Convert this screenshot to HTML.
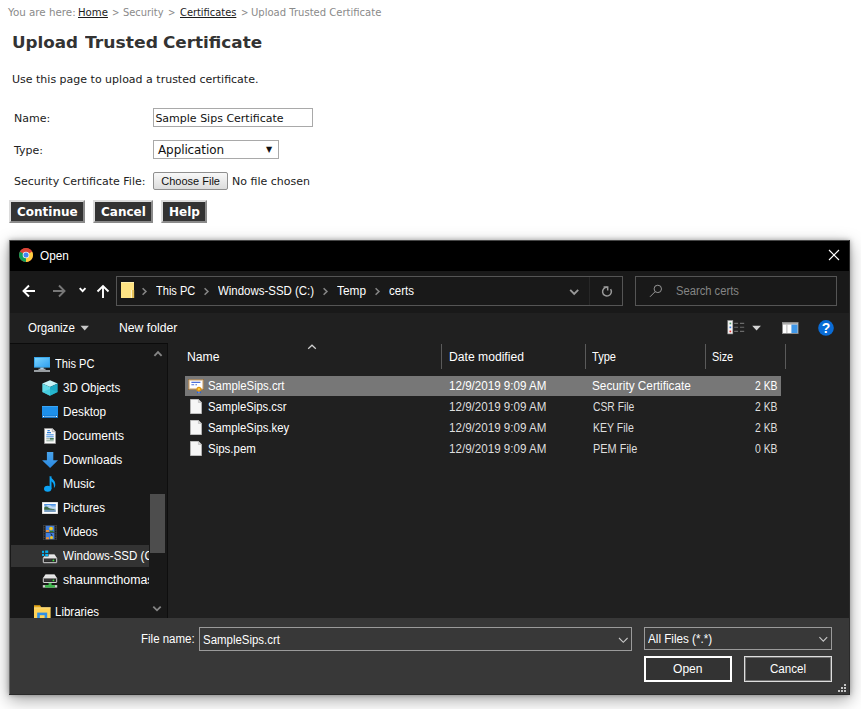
<!DOCTYPE html>
<html><head><meta charset="utf-8"><title>Upload Trusted Certificate</title>
<style>
html,body{margin:0;padding:0;background:#fff;}
body{width:861px;height:709px;overflow:hidden;position:relative;font-family:"DejaVu Sans","Liberation Sans",sans-serif;}
.a{position:absolute;white-space:nowrap;line-height:1;}
.s{font-family:"Liberation Sans","DejaVu Sans",sans-serif;}
.v{font-family:"DejaVu Sans","Liberation Sans",sans-serif;}
#bc{left:7px;top:8px;font-size:10px;color:#8a8a8a;letter-spacing:0.045px;}
#bc u{color:#222;}
#h1{left:12px;top:35px;font-size:16px;font-weight:bold;color:#333;letter-spacing:0.5px;}
#intro{left:12px;top:74px;font-size:11px;color:#1a1a1a;}
.lbl{font-size:11px;color:#222;left:14px;}
#inp{left:153px;top:108px;width:158px;height:17px;border:1px solid #a9a9a9;background:#fff;}
#sel{left:153px;top:140px;width:124px;height:17px;border:1px solid #a9a9a9;background:#fff;}
#cf{left:153px;top:172px;width:73px;height:16px;border:1px solid #8f8f8f;background:linear-gradient(#f8f8f8,#dcdcdc);border-radius:2px;}
.btn{top:200px;height:19px;background:#333;border:2px solid #dcdcdc;border-right-color:#8a8a8a;border-bottom-color:#8a8a8a;color:#fff;font-weight:bold;font-size:12px;}
.btn span{position:absolute;top:4px;left:6px;}
#dlg{left:9px;top:240px;width:841px;height:455px;background:#202020;box-shadow:0 5px 16px rgba(0,0,0,.36),0 0 5px rgba(0,0,0,.30);}
</style></head><body>
<div class="a" id="intro">Use this page to upload a trusted certificate.</div>
<div class="a lbl" id="l1" style="top:113px">Name:</div>
<div class="a lbl" id="l2" style="top:145px">Type:</div>
<div class="a lbl" id="l3" style="top:176px">Security Certificate File:</div>
<div class="a" id="inp"><span class="a" id="inpt" style="left:1.4px;top:4px;font-size:11px;color:#111">Sample Sips Certificate</span></div>
<div class="a" id="sel"><span class="a" id="selt" style="left:4px;top:3px;font-size:12px;color:#111;letter-spacing:-0.1px">Application</span><span class="a" style="left:112px;top:4.5px;font-size:8px;color:#111">&#9660;</span></div>
<div class="a" id="cf"><span class="a s" id="cft" style="left:7.3px;top:2.6px;font-size:11px;color:#111">Choose File</span></div>
<div class="a" id="nfc" style="left:232px;top:176px;font-size:11px;color:#222">No file chosen</div>
<div class="a btn" id="b1" style="left:9px;width:72px"><span id="b1t">Continue</span></div>
<div class="a btn" id="b2" style="left:93px;width:56px"><span id="b2t">Cancel</span></div>
<div class="a btn" id="b3" style="left:161px;width:42px"><span id="b3t">Help</span></div>
<div class="a" id="dlg"></div>
<div class="a v" id="t1" style="left:7.53231px;top:8.02px;font-size:10px;color:#8a8a8a;transform:scaleX(1.0304);transform-origin:0 0;">You are here:</div>
<div class="a v" id="t2" style="left:77.9386px;top:8.02px;font-size:10px;color:#1c1c1c;transform:scaleX(1.0137);transform-origin:0 0;text-decoration:underline;">Home</div>
<div class="a v" id="t3" style="left:111.726px;top:8.02px;font-size:10px;color:#8a8a8a;transform:scaleX(0.8790);transform-origin:0 0;">&gt;</div>
<div class="a v" id="t4" style="left:123.475px;top:8.02px;font-size:10px;color:#8a8a8a;transform:scaleX(0.9870);transform-origin:0 0;">Security</div>
<div class="a v" id="t5" style="left:168.026px;top:8.02px;font-size:10px;color:#8a8a8a;transform:scaleX(0.8790);transform-origin:0 0;">&gt;</div>
<div class="a v" id="t6" style="left:179.935px;top:8.02px;font-size:10px;color:#1c1c1c;transform:scaleX(0.9860);transform-origin:0 0;text-decoration:underline;">Certificates</div>
<div class="a v" id="t7" style="left:240.626px;top:8.02px;font-size:10px;color:#8a8a8a;transform:scaleX(0.8790);transform-origin:0 0;">&gt;</div>
<div class="a v" id="t8" style="left:250.896px;top:8.02px;font-size:10px;color:#8a8a8a;transform:scaleX(1.0019);transform-origin:0 0;">Upload Trusted Certificate</div>
<div class="a v" id="t9" style="left:12.0225px;top:35.29px;font-size:16px;color:#333;transform:scaleX(1.0458);transform-origin:0 0;font-weight:bold;">Upload</div>
<div class="a v" id="t10" style="left:84.5199px;top:35.29px;font-size:16px;color:#333;transform:scaleX(1.0750);transform-origin:0 0;font-weight:bold;">Trusted</div>
<div class="a v" id="t11" style="left:163.128px;top:35.29px;font-size:16px;color:#333;transform:scaleX(1.0514);transform-origin:0 0;font-weight:bold;">Certificate</div>
<div class="a" style="left:9px;top:240px;width:841px;height:31px;background:#000;"></div>
<div class="a" style="left:9px;top:240px;width:841px;height:1px;background:#484848;"></div>
<div class="a" style="left:9px;top:271px;width:841px;height:42px;background:#191919;"></div>
<div class="a" style="left:9px;top:313px;width:841px;height:30px;background:#202020;"></div>
<div class="a" style="left:9px;top:343px;width:159px;height:275px;background:#191919;"></div>
<div class="a" style="left:167px;top:344px;width:1px;height:274px;background:#0e0e0e;"></div>
<div class="a" style="left:10px;top:343px;width:839px;height:1px;background:#0b0b0b;"></div>
<div class="a" style="left:168px;top:343px;width:682px;height:275px;background:#202020;"></div>
<div class="a" style="left:9px;top:618px;width:841px;height:77px;background:#383838;"></div>
<div class="a" style="left:9px;top:240px;width:1px;height:455px;background:#686868;"></div>
<div class="a" style="left:849px;top:240px;width:1px;height:455px;background:#2a2a2a;"></div>
<div class="a" style="left:9px;top:694px;width:841px;height:1px;background:#2a2a2a;"></div>
<svg class="a" style="left:19px;top:248px;" width="14" height="14" viewBox="0 0 14 14"><circle cx="7" cy="7" r="7" fill="#db4437"/>
<path d="M7 7 L13.06 3.5 A7 7 0 0 1 7 14 Z" fill="#ffcd40"/>
<path d="M7 7 L7 14 A7 7 0 0 1 0.94 3.5 Z" fill="#0f9d58"/>
<path d="M7 7 L0.94 3.5 A7 7 0 0 1 13.06 3.5 Z" fill="#db4437"/>
<circle cx="7" cy="7" r="3.3" fill="#f1f1f1"/><circle cx="7" cy="7" r="2.5" fill="#4285f4"/></svg>
<div class="a s" id="t12" style="left:39.736px;top:250.14px;font-size:12px;color:#fff;transform:scaleX(0.9827);transform-origin:0 0;">Open</div>
<svg class="a" style="left:828px;top:249px;" width="12" height="12" viewBox="0 0 12 12"><path d="M1 1 L11 11 M11 1 L1 11" stroke="#fff" stroke-width="1.1" fill="none"/></svg>
<svg class="a" style="left:22px;top:284px;" width="14" height="14" viewBox="0 0 14 14"><path d="M13 7 H1.6 M7 1.5 L1.5 7 L7 12.5" stroke="#fff" stroke-width="1.9" fill="none"/></svg>
<svg class="a" style="left:52px;top:284px;" width="14" height="14" viewBox="0 0 14 14"><path d="M1 7 H12.4 M7 1.5 L12.5 7 L7 12.5" stroke="#777" stroke-width="1.9" fill="none"/></svg>
<svg class="a" style="left:78px;top:286px;" width="9" height="8" viewBox="0 0 9 8"><path d="M1.7 2.2 L4.6 5.1 L7.5 2.2" stroke="#fff" stroke-width="1.9" fill="none"/></svg>
<svg class="a" style="left:96px;top:284px;" width="14" height="15" viewBox="0 0 14 15"><path d="M7 14 V2 M1.5 7.5 L7 2 L12.5 7.5" stroke="#fff" stroke-width="1.9" fill="none"/></svg>
<div class="a" style="left:116px;top:276px;width:505px;height:28px;background:#191919;border:1px solid #555;"></div>
<div class="a" style="left:589px;top:277px;width:1px;height:28px;background:#272727;"></div>
<svg class="a" style="left:121px;top:282px;" width="14" height="16" viewBox="0 0 14 16"><rect x="0" y="0" width="13" height="16" fill="#ffe484"/><rect x="0" y="0" width="13" height="1" fill="#fff0b0"/><rect x="10" y="8" width="3.2" height="8" fill="#e6c25a"/><rect x="10" y="8" width="1" height="8" fill="#fff3c4"/></svg>
<svg class="a" style="left:141.2px;top:286.8px;" width="7" height="9" viewBox="0 0 7 9"><path d="M1.6 1.3 L4.9 4.5 L1.6 7.7" stroke="#858585" stroke-width="1.6" fill="none"/></svg>
<div class="a s" id="t13" style="left:156.373px;top:285.14px;font-size:12px;color:#fff;transform:scaleX(0.9219);transform-origin:0 0;">This PC</div>
<svg class="a" style="left:203.2px;top:286.8px;" width="7" height="9" viewBox="0 0 7 9"><path d="M1.6 1.3 L4.9 4.5 L1.6 7.7" stroke="#858585" stroke-width="1.6" fill="none"/></svg>
<div class="a s" id="t14" style="left:217.893px;top:285.14px;font-size:12px;color:#fff;transform:scaleX(0.9539);transform-origin:0 0;">Windows-SSD (C:)</div>
<svg class="a" style="left:322.4px;top:286.8px;" width="7" height="9" viewBox="0 0 7 9"><path d="M1.6 1.3 L4.9 4.5 L1.6 7.7" stroke="#858585" stroke-width="1.6" fill="none"/></svg>
<div class="a s" id="t15" style="left:337.365px;top:285.14px;font-size:12px;color:#fff;transform:scaleX(0.9870);transform-origin:0 0;">Temp</div>
<svg class="a" style="left:374.3px;top:286.8px;" width="7" height="9" viewBox="0 0 7 9"><path d="M1.6 1.3 L4.9 4.5 L1.6 7.7" stroke="#858585" stroke-width="1.6" fill="none"/></svg>
<div class="a s" id="t16" style="left:389.258px;top:285.14px;font-size:12px;color:#fff;transform:scaleX(0.9584);transform-origin:0 0;">certs</div>
<svg class="a" style="left:569px;top:288px;" width="11" height="8" viewBox="0 0 11 8"><path d="M1.2 1.8 L5.2 5.8 L9.2 1.8" stroke="#999" stroke-width="1.9" fill="none"/></svg>
<svg class="a" style="left:600px;top:284px;" width="13" height="14" viewBox="0 0 13 14"><path d="M10.6 5.1 A4.4 4.4 0 1 1 7.2 3.2" stroke="#999" stroke-width="1.5" fill="none"/><path d="M3.6 3 H7.7 V6.4" stroke="#999" stroke-width="1.5" fill="none"/></svg>
<div class="a" style="left:635px;top:276px;width:200px;height:28px;background:#191919;border:1px solid #555;"></div>
<svg class="a" style="left:649px;top:284px;" width="14" height="14" viewBox="0 0 14 14"><circle cx="8.8" cy="4.9" r="3.7" stroke="#959595" stroke-width="1" fill="none"/><path d="M6.1 7.7 L1 12.8" stroke="#959595" stroke-width="1"/></svg>
<div class="a s" id="t17" style="left:676.207px;top:285.14px;font-size:12px;color:#858585;transform:scaleX(0.9328);transform-origin:0 0;">Search certs</div>
<div class="a s" id="t18" style="left:28.2418px;top:322.14px;font-size:12px;color:#fff;transform:scaleX(0.9610);transform-origin:0 0;">Organize</div>
<svg class="a" style="left:80px;top:325px;" width="10" height="6" viewBox="0 0 10 6"><path d="M0.5 0.8 H8.9 L4.7 5.4 Z" fill="#c8c8c8"/></svg>
<div class="a s" id="t19" style="left:118.936px;top:322.14px;font-size:12px;color:#fff;transform:scaleX(1.0162);transform-origin:0 0;">New folder</div>
<svg class="a" style="left:726.8px;top:320px;" width="18" height="15" viewBox="0 0 18 15"><rect x="0.8" y="0.5" width="5" height="13.4" fill="#f6f6f6" stroke="#9a9a9a" stroke-width="0.6"/>
<rect x="2.5" y="2.6" width="1.7" height="1.7" fill="#4a9a6a"/><rect x="2.5" y="6.5" width="1.7" height="1.7" fill="#3a78e0"/><rect x="2.5" y="10.6" width="1.7" height="1.7" fill="#e03030"/>
<path d="M7.2 3.4 H11.1 M13 3.4 H17.2 M7.2 7.3 H11.1 M13 7.3 H17.2 M7.2 11.4 H11.1 M13 11.4 H17.2" stroke="#6a6a6a" stroke-width="1.1"/></svg>
<svg class="a" style="left:752px;top:325px;" width="10" height="6" viewBox="0 0 10 6"><path d="M0.2 0.8 H8.9 L4.55 5.6 Z" fill="#d4d4d4"/></svg>
<svg class="a" style="left:782px;top:322px;" width="17" height="12" viewBox="0 0 17 12"><rect x="0.5" y="0.5" width="15.5" height="11" fill="#fdfdfd" stroke="#8c8c8c" stroke-width="1"/><rect x="1" y="1" width="14.5" height="1.6" fill="#a9a9a9"/><rect x="4.4" y="2.6" width="1" height="8.4" fill="#b4b4b4"/><rect x="9.4" y="2.6" width="6.1" height="8.4" fill="#3f97e8"/></svg>
<svg class="a" style="left:818px;top:320px;" width="16" height="16" viewBox="0 0 16 16"><circle cx="8" cy="7.9" r="7.8" fill="#0a6cd6"/></svg>
<div class="a s" id="t20" style="left:821.639px;top:321.07px;font-size:14px;color:#fff;transform:scaleX(1.0000);transform-origin:0 0;font-weight:bold;">?</div>
<div class="a" style="left:11px;top:545px;width:138px;height:22px;background:#333333;"></div>
<svg class="a" style="left:152.6px;top:349.6px;" width="10" height="8" viewBox="0 0 10 8"><path d="M1.4 5.8 L5 2.2 L8.6 5.8" stroke="#858585" stroke-width="1.9" fill="none"/></svg>
<svg class="a" style="left:152px;top:605px;" width="10" height="7" viewBox="0 0 10 7"><path d="M1.3 1.6 L5 5.3 L8.7 1.6" stroke="#858585" stroke-width="1.8" fill="none"/></svg>
<div class="a" style="left:150px;top:494px;width:15px;height:59px;background:#4d4d4d;"></div>
<div class="a s" id="t21" style="left:55.3731px;top:357.64px;font-size:12px;color:#fff;transform:scaleX(0.9243);transform-origin:0 0;">This PC</div>
<div class="a s" id="t22" style="left:62.9936px;top:381.64px;font-size:12px;color:#fff;transform:scaleX(0.9646);transform-origin:0 0;">3D Objects</div>
<div class="a s" id="t23" style="left:63.2755px;top:405.64px;font-size:12px;color:#fff;transform:scaleX(0.9785);transform-origin:0 0;">Desktop</div>
<div class="a s" id="t24" style="left:63.247px;top:429.64px;font-size:12px;color:#fff;transform:scaleX(1.0057);transform-origin:0 0;">Documents</div>
<div class="a s" id="t25" style="left:63.2537px;top:453.64px;font-size:12px;color:#fff;transform:scaleX(0.9993);transform-origin:0 0;">Downloads</div>
<div class="a s" id="t26" style="left:63.4369px;top:477.64px;font-size:12px;color:#fff;transform:scaleX(1.0153);transform-origin:0 0;">Music</div>
<div class="a s" id="t27" style="left:63.284px;top:501.64px;font-size:12px;color:#fff;transform:scaleX(0.9703);transform-origin:0 0;">Pictures</div>
<div class="a s" id="t28" style="left:63.1753px;top:525.64px;font-size:12px;color:#fff;transform:scaleX(0.9496);transform-origin:0 0;">Videos</div>
<div class="a" style="left:10px;top:343px;width:139px;height:275px;overflow:hidden">
<div class="a s" id="t29" style="left:53.1925px;top:206.64px;font-size:12px;color:#fff;transform:scaleX(0.9619);transform-origin:0 0;">Windows-SSD (C:)</div>
<div class="a s" id="t30" style="left:53.0279px;top:230.64px;font-size:12px;color:#fff;transform:scaleX(1.0280);transform-origin:0 0;">shaunmcthomas</div>
</div>
<div class="a s" id="t31" style="left:55.199px;top:605.64px;font-size:12px;color:#fff;transform:scaleX(0.9560);transform-origin:0 0;">Libraries</div>
<svg class="a" style="left:34px;top:357px;" width="16" height="15" viewBox="0 0 16 15"><defs><linearGradient id="gm" x1="0" y1="0" x2="1" y2="1"><stop offset="0" stop-color="#7dd6ff"/><stop offset="1" stop-color="#2f9ff0"/></linearGradient></defs>
<rect x="0.5" y="0.5" width="15" height="9.6" fill="url(#gm)" stroke="#3aa8ec" stroke-width="1"/>
<rect x="6.3" y="10.5" width="3.4" height="1.6" fill="#9ec8e6"/><rect x="4.5" y="11.8" width="7" height="0.9" fill="#dfe9f0"/>
<rect x="0" y="13.3" width="16" height="1.4" fill="#cfd6dc"/></svg>
<svg class="a" style="left:42px;top:380px;" width="16" height="16" viewBox="0 0 16 16"><path d="M8 0.3 L15.7 3.6 L8 7 L0.3 3.6 Z" fill="#c7f4f8"/>
<path d="M0.3 3.6 L8 7 L8 15.8 L0.3 12 Z" fill="#63dbe8"/>
<path d="M15.7 3.6 L8 7 L8 15.8 L15.7 12 Z" fill="#1cabc6"/>
<path d="M0.3 12 L8 9 L15.7 12 L8 15.8 Z" fill="#2fc0d6" opacity="0.55"/></svg>
<svg class="a" style="left:42px;top:406px;" width="16" height="12" viewBox="0 0 16 12"><rect x="0" y="0" width="16" height="11.7" fill="#1d8fea"/><rect x="0" y="0" width="16" height="1" fill="#3aa5f5"/>
<rect x="0" y="9.3" width="16" height="2.4" fill="#1679d2"/><rect x="1" y="10" width="1.2" height="1" fill="#fff"/><rect x="13.8" y="10" width="1.2" height="1" fill="#fff"/><rect x="3" y="10.2" width="10" height="0.7" fill="#8fc8f6"/></svg>
<svg class="a" style="left:44px;top:428px;" width="12" height="16" viewBox="0 0 12 16"><path d="M0.5 0.5 H8.3 L11.5 3.7 V15.5 H0.5 Z" fill="#fafafa" stroke="#9a9a9a" stroke-width="0.8"/>
<path d="M8.3 0.5 V3.7 H11.5" fill="#e4e4e4" stroke="#9a9a9a" stroke-width="0.7"/>
<path d="M3.5 2.6 L5.8 2.6 M3 4.6 H7" stroke="#2f7fd8" stroke-width="1.1"/>
<path d="M2.3 6.8 H9.7 M2.3 8.8 H9.7" stroke="#3a8ae0" stroke-width="1"/><path d="M2.3 10.8 H9.7 M2.3 12.8 H9.7" stroke="#7a9a8a" stroke-width="0.9"/><rect x="6" y="10.2" width="3.7" height="1.3" fill="#2c6e49"/></svg>
<svg class="a" style="left:42px;top:452px;" width="16" height="16" viewBox="0 0 16 16"><defs><linearGradient id="gd" x1="0" y1="0" x2="0" y2="1"><stop offset="0" stop-color="#4aa4ec"/><stop offset="1" stop-color="#2a8ae2"/></linearGradient></defs><path d="M4.9 -0.2 H11.3 V8.2 H16.1 L8.1 16 L0.1 8.2 H4.9 Z" fill="url(#gd)"/></svg>
<svg class="a" style="left:44px;top:476px;" width="12" height="16" viewBox="0 0 12 16"><ellipse cx="3.7" cy="12.7" rx="3.7" ry="3" fill="#0ca3f5"/><rect x="5.6" y="0.3" width="1.9" height="12.6" fill="#0ca3f5"/>
<path d="M5.6 0.3 C7.5 3 11.5 4 11.3 9 C11.2 10.3 10.6 11.3 9.9 12 C10.3 8 9 6.6 7.4 5.6 Z" fill="#0ca3f5"/></svg>
<svg class="a" style="left:42px;top:502px;" width="16" height="12" viewBox="0 0 16 12"><defs><linearGradient id="gs" x1="0" y1="0" x2="0" y2="1"><stop offset="0" stop-color="#3a86e2"/><stop offset="0.5" stop-color="#cfe3f6"/><stop offset="0.75" stop-color="#86a9c6"/><stop offset="1" stop-color="#4f7fae"/></linearGradient></defs>
<rect x="0" y="0" width="16" height="12" fill="#bdbdbd"/><rect x="0.5" y="0.5" width="15" height="11" fill="#fff"/>
<rect x="2.2" y="2" width="11.6" height="7.8" fill="url(#gs)"/>
<path d="M4 3.6 C6 3 8 3.4 10 4.2 C8 4.6 6 4.4 4 3.6 Z" fill="#fff" opacity="0.8"/>
<path d="M2.2 5.4 C3.5 4 5 4.6 6.6 5.8 C8.4 6.9 10.4 7 12.4 7.1 V7.7 H2.2 Z" fill="#3d6b45"/></svg>
<svg class="a" style="left:43px;top:525px;" width="14" height="15" viewBox="0 0 14 15"><rect x="0" y="0" width="14" height="15" fill="#3e3e3e"/><rect x="2.8" y="0.8" width="8.4" height="6.3" fill="#3f7fe0"/><rect x="2.8" y="7.9" width="8.4" height="6.3" fill="#3f7fe0"/><rect x="0.7" y="0.9" width="1.3" height="1.4" fill="#1a1a1a"/><rect x="12" y="0.9" width="1.3" height="1.4" fill="#1a1a1a"/><rect x="0.7" y="3.3" width="1.3" height="1.4" fill="#1a1a1a"/><rect x="12" y="3.3" width="1.3" height="1.4" fill="#1a1a1a"/><rect x="0.7" y="5.7" width="1.3" height="1.4" fill="#1a1a1a"/><rect x="12" y="5.7" width="1.3" height="1.4" fill="#1a1a1a"/><rect x="0.7" y="8.1" width="1.3" height="1.4" fill="#1a1a1a"/><rect x="12" y="8.1" width="1.3" height="1.4" fill="#1a1a1a"/><rect x="0.7" y="10.5" width="1.3" height="1.4" fill="#1a1a1a"/><rect x="12" y="10.5" width="1.3" height="1.4" fill="#1a1a1a"/><rect x="0.7" y="12.9" width="1.3" height="1.4" fill="#1a1a1a"/><rect x="12" y="12.9" width="1.3" height="1.4" fill="#1a1a1a"/><circle cx="8" cy="3.6" r="1.9" fill="#f2c81e"/><rect x="3" y="5" width="3" height="2" fill="#e8913a"/><rect x="7" y="5.8" width="3.5" height="1.3" fill="#2e7d32"/><circle cx="8.5" cy="12.4" r="1.5" fill="#f2c81e"/><rect x="3" y="12.2" width="3" height="2" fill="#e8913a"/><path d="M7.5 8 L10 10.5 L8 10.5 Z" fill="#222"/></svg>
<svg class="a" style="left:42px;top:550.2px;" width="16" height="14" viewBox="0 0 16 14"><path d="M3.2 4.8 H12.8 L14.9 8 H1.1 Z" fill="#e2e2e2"/><path d="M3.4 4.9 H12.6" stroke="#fafafa" stroke-width="0.8"/><rect x="1.3" y="8" width="13.4" height="4.7" rx="0.4" fill="#2b2b2b" stroke="#e6e6e6" stroke-width="0.9"/><rect x="2.4" y="9.6" width="7" height="0.8" fill="#4a4a4a"/><circle cx="11.4" cy="10.4" r="0.9" fill="#3cf040"/><rect x="2.4" y="3.6" width="4.2" height="2.8" fill="#333"/><rect x="-0.2" y="0.8" width="2.2" height="2.1" fill="#08b4f4"/><rect x="3.2" y="0.5" width="3" height="2.4" fill="#08b4f4"/><rect x="-0.2" y="3.9" width="2.2" height="2.1" fill="#08b4f4"/><rect x="3.2" y="3.9" width="3" height="2.4" fill="#08b4f4"/></svg>
<svg class="a" style="left:42px;top:570.2px;" width="16" height="18" viewBox="0 0 16 18"><path d="M3.2 4.8 H12.8 L14.9 8 H1.1 Z" fill="#e2e2e2"/><path d="M3.4 4.9 H12.6" stroke="#fafafa" stroke-width="0.8"/>
<rect x="1.3" y="8" width="13.4" height="4.5" rx="0.4" fill="#2b2b2b" stroke="#e6e6e6" stroke-width="0.9"/><rect x="2.4" y="9.6" width="7" height="0.8" fill="#4a4a4a"/><circle cx="11.4" cy="10.3" r="0.9" fill="#3cf040"/>
<rect x="6.6" y="12.9" width="3" height="2.6" fill="#3cb54a"/><rect x="0.8" y="15.1" width="14.4" height="2.5" fill="#d0d0d0"/><rect x="3" y="15.1" width="10" height="2.5" fill="#3cb54a"/></svg>
<svg class="a" style="left:34px;top:605px;" width="17" height="13" viewBox="0 0 17 13"><path d="M0 0.3 H6 L7.6 2.4 H0 Z" fill="#e6a817"/><rect x="0" y="2.4" width="16.6" height="11" fill="#ffd257"/><rect x="0" y="2.4" width="16.6" height="0.9" fill="#ffe28a"/>
<rect x="3.2" y="7.6" width="10" height="6" fill="#2f8fe6"/><rect x="5.8" y="10.2" width="4.8" height="3.4" fill="#ffd257"/></svg>
<svg class="a" style="left:306.6px;top:343.5px;" width="10" height="6" viewBox="0 0 10 6"><path d="M1.2 4.8 L5 1.2 L8.8 4.8" stroke="#cfcfcf" stroke-width="1.2" fill="none"/></svg>
<div class="a" style="left:441px;top:344px;width:1px;height:25px;background:#5a5a5a;"></div>
<div class="a" style="left:585px;top:344px;width:1px;height:25px;background:#5a5a5a;"></div>
<div class="a" style="left:705px;top:344px;width:1px;height:25px;background:#5a5a5a;"></div>
<div class="a" style="left:785px;top:344px;width:1px;height:25px;background:#5a5a5a;"></div>
<div class="a s" id="t32" style="left:187.336px;top:350.74px;font-size:12px;color:#fff;transform:scaleX(1.0162);transform-origin:0 0;">Name</div>
<div class="a s" id="t33" style="left:448.64px;top:350.74px;font-size:12px;color:#fff;transform:scaleX(1.0122);transform-origin:0 0;">Date modified</div>
<div class="a s" id="t34" style="left:592.274px;top:350.64px;font-size:12px;color:#fff;transform:scaleX(0.9214);transform-origin:0 0;">Type</div>
<div class="a s" id="t35" style="left:712.336px;top:350.74px;font-size:12px;color:#fff;transform:scaleX(0.9051);transform-origin:0 0;">Size</div>
<div class="a" style="left:185px;top:375.5px;width:596px;height:20.5px;background:#777777;"></div>
<div class="a s" id="t36" style="left:208.39px;top:379.84px;font-size:12px;color:#fff;transform:scaleX(0.9483);transform-origin:0 0;">SampleSips.crt</div>
<div class="a s" id="t37" style="left:448.897px;top:379.84px;font-size:12px;color:#fff;transform:scaleX(0.9668);transform-origin:0 0;">12/9/2019 9:09 AM</div>
<div class="a s" id="t38" style="left:592.254px;top:379.84px;font-size:12px;color:#fff;transform:scaleX(0.9820);transform-origin:0 0;">Security Certificate</div>
<div class="a s" id="t39" style="left:755.049px;top:379.84px;font-size:12px;color:#fff;transform:scaleX(0.8646);transform-origin:0 0;">2 KB</div>
<div class="a s" id="t40" style="left:208.399px;top:400.84px;font-size:12px;color:#fff;transform:scaleX(0.9404);transform-origin:0 0;">SampleSips.csr</div>
<div class="a s" id="t41" style="left:448.897px;top:400.84px;font-size:12px;color:#dedede;transform:scaleX(0.9668);transform-origin:0 0;">12/9/2019 9:09 AM</div>
<div class="a s" id="t42" style="left:592.748px;top:400.84px;font-size:12px;color:#dedede;transform:scaleX(0.8618);transform-origin:0 0;">CSR File</div>
<div class="a s" id="t43" style="left:755.049px;top:400.84px;font-size:12px;color:#dedede;transform:scaleX(0.8646);transform-origin:0 0;">2 KB</div>
<svg class="a" style="left:190px;top:398.6px;" width="12" height="15" viewBox="0 0 12 15"><path d="M0.4 0.3 H8.4 L11.6 3.5 V14.8 H0.4 Z" fill="#f6f6f6" stroke="#bdbdbd" stroke-width="0.6"/><path d="M8.4 0.3 V3.5 H11.6 Z" fill="#d6d6d6" stroke="#aaa" stroke-width="0.5"/></svg>
<div class="a s" id="t44" style="left:208.396px;top:421.84px;font-size:12px;color:#fff;transform:scaleX(0.9430);transform-origin:0 0;">SampleSips.key</div>
<div class="a s" id="t45" style="left:448.897px;top:421.84px;font-size:12px;color:#dedede;transform:scaleX(0.9668);transform-origin:0 0;">12/9/2019 9:09 AM</div>
<div class="a s" id="t46" style="left:592.972px;top:421.84px;font-size:12px;color:#dedede;transform:scaleX(0.8778);transform-origin:0 0;">KEY File</div>
<div class="a s" id="t47" style="left:755.049px;top:421.84px;font-size:12px;color:#dedede;transform:scaleX(0.8646);transform-origin:0 0;">2 KB</div>
<svg class="a" style="left:190px;top:419.6px;" width="12" height="15" viewBox="0 0 12 15"><path d="M0.4 0.3 H8.4 L11.6 3.5 V14.8 H0.4 Z" fill="#f6f6f6" stroke="#bdbdbd" stroke-width="0.6"/><path d="M8.4 0.3 V3.5 H11.6 Z" fill="#d6d6d6" stroke="#aaa" stroke-width="0.5"/></svg>
<div class="a s" id="t48" style="left:208.38px;top:442.84px;font-size:12px;color:#fff;transform:scaleX(0.9583);transform-origin:0 0;">Sips.pem</div>
<div class="a s" id="t49" style="left:448.897px;top:442.84px;font-size:12px;color:#dedede;transform:scaleX(0.9668);transform-origin:0 0;">12/9/2019 9:09 AM</div>
<div class="a s" id="t50" style="left:593.045px;top:442.84px;font-size:12px;color:#dedede;transform:scaleX(0.9116);transform-origin:0 0;">PEM File</div>
<div class="a s" id="t51" style="left:755.095px;top:442.84px;font-size:12px;color:#dedede;transform:scaleX(0.8628);transform-origin:0 0;">0 KB</div>
<svg class="a" style="left:190px;top:440.6px;" width="12" height="15" viewBox="0 0 12 15"><path d="M0.4 0.3 H8.4 L11.6 3.5 V14.8 H0.4 Z" fill="#f6f6f6" stroke="#bdbdbd" stroke-width="0.6"/><path d="M8.4 0.3 V3.5 H11.6 Z" fill="#d6d6d6" stroke="#aaa" stroke-width="0.5"/></svg>
<svg class="a" style="left:188px;top:378.6px;" width="16" height="15" viewBox="0 0 16 15"><rect x="0.4" y="0.4" width="15.2" height="10.2" fill="#fff" stroke="#8f6a3c" stroke-width="0.8"/>
<rect x="1.3" y="1.3" width="13.4" height="8.4" fill="#fff" stroke="#dcbf98" stroke-width="1"/>
<path d="M3.4 3.4 H12.4 M3.4 5.8 H6.2 M7.4 5.8 H9" stroke="#5070d8" stroke-width="1.1"/>
<path d="M9 11.4 H12.8 V14.5 L11.9 13.7 H9.9 L9 14.5 Z" fill="#1a5cf0"/><rect x="10.6" y="12.2" width="0.7" height="2" fill="#9fc0ff"/>
<circle cx="10.9" cy="10.2" r="2.5" fill="#e3940e"/><circle cx="10.9" cy="10.1" r="1.2" fill="#ffcf40"/></svg>
<div class="a s" id="t52" style="left:140.697px;top:633.34px;font-size:12px;color:#fff;transform:scaleX(0.9577);transform-origin:0 0;">File name:</div>
<div class="a" style="left:199px;top:627px;width:431px;height:22px;background:#383838;border:1px solid #9b9b9b;"></div>
<div class="a s" id="t53" style="left:203.385px;top:633.84px;font-size:12px;color:#fff;transform:scaleX(0.9533);transform-origin:0 0;">SampleSips.crt</div>
<svg class="a" style="left:617.8px;top:636.6px;" width="11" height="7" viewBox="0 0 11 7"><path d="M1 1 L5.3 5.3 L9.6 1" stroke="#c8c8c8" stroke-width="1.1" fill="none"/></svg>
<div class="a" style="left:644px;top:627px;width:186px;height:21px;background:#383838;border:1px solid #9b9b9b;"></div>
<div class="a s" id="t54" style="left:647.876px;top:632.94px;font-size:12px;color:#fff;transform:scaleX(0.9731);transform-origin:0 0;">All Files (*.*)</div>
<svg class="a" style="left:817.5px;top:635.6px;" width="11" height="7" viewBox="0 0 11 7"><path d="M1.4 1.2 L5.3 5.1 L9.2 1.2" stroke="#c8c8c8" stroke-width="1.1" fill="none"/></svg>
<div class="a" style="left:644px;top:656px;width:84px;height:22px;background:#333;border:2px solid #fff;"></div>
<div class="a s" id="t55" style="left:672.929px;top:662.94px;font-size:12px;color:#fff;transform:scaleX(1.0071);transform-origin:0 0;">Open</div>
<div class="a" style="left:744px;top:656px;width:86px;height:24px;background:#333;border:1px solid #dedede;box-shadow:inset 0 0 0 1px rgba(255,255,255,.3);"></div>
<div class="a s" id="t56" style="left:770.018px;top:662.94px;font-size:12px;color:#fff;transform:scaleX(0.9656);transform-origin:0 0;">Cancel</div>
<svg class="a" style="left:838px;top:684px;" width="8" height="8" viewBox="0 0 8 8"><rect x="6" y="0" width="2" height="2" fill="#c4c4c4"/><rect x="3" y="3" width="2" height="2" fill="#c4c4c4"/><rect x="6" y="3" width="2" height="2" fill="#c4c4c4"/><rect x="0" y="6" width="2" height="2" fill="#c4c4c4"/><rect x="3" y="6" width="2" height="2" fill="#c4c4c4"/><rect x="6" y="6" width="2" height="2" fill="#c4c4c4"/></svg>
</body></html>
